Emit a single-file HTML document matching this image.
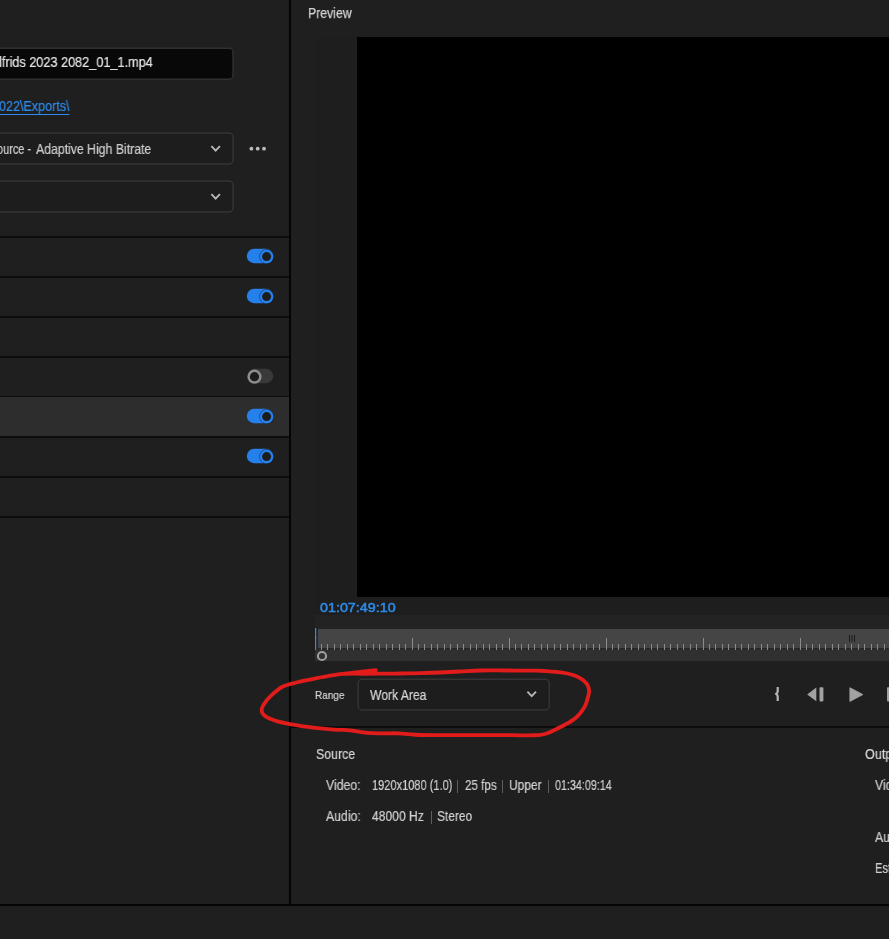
<!DOCTYPE html>
<html><head><meta charset="utf-8"><title>Export</title>
<style>
html,body{margin:0;padding:0;background:#1f1f1f;}
body{width:889px;height:939px;position:relative;overflow:hidden;font-family:"Liberation Sans",sans-serif;color:#d2d2d2;}
.abs{position:absolute;}
.t{-webkit-text-stroke:0.2px currentColor;will-change:transform;position:absolute;white-space:nowrap;line-height:1;transform-origin:0 0;}
.box{position:absolute;box-sizing:border-box;border:1px solid #3a3a3a;border-radius:4px;background:#1d1d1d;}
.sep{position:absolute;left:0;width:289px;height:2px;background:#0d0d0d;}
.tog{position:absolute;left:247px;width:26px;height:14px;border-radius:7px;background:#2680eb;}
.tog i{position:absolute;right:0;top:0;width:14px;height:14px;box-sizing:border-box;border-radius:50%;border:2px solid #2680eb;background:#1e1e1e;box-shadow:0 0 0 1px #1e1e1e;}
.tog.off{background:#3a3a3a;}
.tog.off i{right:auto;left:0;border-color:#8e8e8e;box-shadow:none;}
</style></head><body>

<!-- left panel -->
<div class="abs" style="left:0;top:397px;width:289px;height:39px;background:#2d2d2d;"></div>
<div class="sep" style="top:236px"></div>
<div class="sep" style="top:276px"></div>
<div class="sep" style="top:316px"></div>
<div class="sep" style="top:356px"></div>
<div class="sep" style="top:396px;height:1px"></div>
<div class="sep" style="top:436px"></div>
<div class="sep" style="top:476px"></div>
<div class="sep" style="top:516px"></div>

<svg class="abs" style="left:0;top:0" width="889" height="939" viewBox="0 0 889 939">
<g fill="#1d1d1d" stroke="#343434" stroke-width="1.5">
<rect x="-10" y="48.25" width="243.05" height="31" rx="4" fill="#080808" stroke="#303030"/>
<rect x="-10" y="133.05" width="243.05" height="31" rx="4"/>
<rect x="-10" y="181" width="243.05" height="31" rx="4"/>
<rect x="358.2" y="679.3" width="191.1" height="30.6" rx="4"/>
</g>
<g fill="none" stroke="#b6b6b6" stroke-width="1.9">
<path d="M211.4 146.2 L215.65 150.7 L219.9 146.2"/>
<path d="M211.4 194.2 L215.65 198.7 L219.9 194.2"/>
<path d="M527.4 691.6 L531.7 696.1 L536 691.6"/>
</g>
<g transform="translate(0,0)"><rect x="246.8" y="248.8" width="26.4" height="14.4" rx="7.2" fill="#2680eb"/><circle cx="266.6" cy="256.6" r="7.35" fill="#1c1c1c" opacity=".75"/><circle cx="266.6" cy="256.6" r="6.8" fill="#2680eb"/><circle cx="266.6" cy="256.6" r="4.5" fill="#1c1c1c"/></g>
<g transform="translate(0,40)"><rect x="246.8" y="248.8" width="26.4" height="14.4" rx="7.2" fill="#2680eb"/><circle cx="266.6" cy="256.6" r="7.35" fill="#1c1c1c" opacity=".75"/><circle cx="266.6" cy="256.6" r="6.8" fill="#2680eb"/><circle cx="266.6" cy="256.6" r="4.5" fill="#1c1c1c"/></g>
<g transform="translate(0,120)"><rect x="247.4" y="248.8" width="25.9" height="14.4" rx="7.2" fill="#393939"/><circle cx="254.5" cy="256.7" r="7.1" fill="#8e8e8e"/><circle cx="254.5" cy="256.7" r="4.6" fill="#1c1c1c"/></g>
<g transform="translate(0,160)"><rect x="246.8" y="248.8" width="26.4" height="14.4" rx="7.2" fill="#2680eb"/><circle cx="266.6" cy="256.6" r="7.35" fill="#1c1c1c" opacity=".75"/><circle cx="266.6" cy="256.6" r="6.8" fill="#2680eb"/><circle cx="266.6" cy="256.6" r="4.5" fill="#1c1c1c"/></g>
<g transform="translate(0,200)"><rect x="246.8" y="248.8" width="26.4" height="14.4" rx="7.2" fill="#2680eb"/><circle cx="266.6" cy="256.6" r="7.35" fill="#1c1c1c" opacity=".75"/><circle cx="266.6" cy="256.6" r="6.8" fill="#2680eb"/><circle cx="266.6" cy="256.6" r="4.5" fill="#1c1c1c"/></g>
<g fill="#bdbdbd"><circle cx="251.4" cy="148.7" r="1.9"/><circle cx="257.7" cy="148.7" r="1.9"/><circle cx="264" cy="148.7" r="1.9"/></g>
</svg>
<div class="t" id="fn" style="left:-1px;transform:scaleX(0.887);top:55px;font-size:14.3px;color:#e6e6e6;">lfrids 2023 2082_01_1.mp4</div>
<div class="t" id="lnk" style="left:-1px;transform:scaleX(0.878);top:99px;font-size:14.3px;color:#2d8ceb;text-decoration:underline;text-decoration-thickness:1px;text-underline-offset:2.5px;">022\Exports\</div>
<div class="t" id="pre" style="left:-2.6px;transform:scaleX(0.765);top:141.7px;font-size:14.3px;color:#d0d0d0;">ource -</div>
<div class="t" id="pre2" style="left:35.6px;transform:scaleX(0.858);top:141.7px;font-size:14.3px;color:#d0d0d0;">Adaptive High Bitrate</div>

<!-- dividers -->
<div class="abs" style="left:289px;top:0;width:2px;height:905px;background:#050505;"></div>
<div class="abs" style="left:0;top:904px;width:889px;height:2px;background:#050505;"></div>

<!-- preview -->
<div class="t" id="pv" style="left:307.5px;transform:scaleX(0.876);top:6.2px;font-size:14px;color:#d2d2d2;-webkit-text-stroke:0.25px #d2d2d2;">Preview</div>
<div class="abs" style="left:315px;top:37px;width:574px;height:578px;background:#1e1e1e;"></div>
<div class="abs" style="left:357px;top:37px;width:532px;height:560px;background:#000;"></div>
<div class="t" id="tc" style="left:320px;transform:scaleX(1.085);top:601px;font-size:13.2px;color:#2d8ceb;-webkit-text-stroke:0.5px #2d8ceb;">01:07:49:10</div>

<!-- timeline -->
<div class="abs" style="left:315px;top:615px;width:574px;height:35px;background:#232323;"></div>
<div class="abs" style="left:318px;top:648px;width:571px;height:2px;background:#292929;"></div>
<div class="abs" style="left:318px;top:629px;width:571px;height:19px;background:#454545;"></div>
<div class="abs" style="left:315px;top:650px;width:574px;height:11px;background:#303030;"></div>
<svg class="abs" id="ruler" style="left:0;top:0" width="889" height="939" viewBox="0 0 889 939">
<g fill="#8c8c8c"><rect x="321" y="644" width="1" height="6"/><rect x="327" y="644" width="1" height="6"/><rect x="334" y="644" width="1" height="6"/><rect x="340" y="644" width="1" height="6"/><rect x="347" y="644" width="1" height="6"/><rect x="353" y="644" width="1" height="6"/><rect x="360" y="644" width="1" height="6"/><rect x="366" y="644" width="1" height="6"/><rect x="373" y="644" width="1" height="6"/><rect x="379" y="644" width="1" height="6"/><rect x="386" y="644" width="1" height="6"/><rect x="392" y="644" width="1" height="6"/><rect x="399" y="644" width="1" height="6"/><rect x="405" y="644" width="1" height="6"/><rect x="412" y="638" width="1" height="12"/><rect x="418" y="644" width="1" height="6"/><rect x="424" y="644" width="1" height="6"/><rect x="431" y="644" width="1" height="6"/><rect x="437" y="644" width="1" height="6"/><rect x="444" y="644" width="1" height="6"/><rect x="450" y="644" width="1" height="6"/><rect x="457" y="644" width="1" height="6"/><rect x="463" y="644" width="1" height="6"/><rect x="470" y="644" width="1" height="6"/><rect x="476" y="644" width="1" height="6"/><rect x="483" y="644" width="1" height="6"/><rect x="489" y="644" width="1" height="6"/><rect x="496" y="644" width="1" height="6"/><rect x="502" y="644" width="1" height="6"/><rect x="509" y="638" width="1" height="12"/><rect x="515" y="644" width="1" height="6"/><rect x="521" y="644" width="1" height="6"/><rect x="528" y="644" width="1" height="6"/><rect x="534" y="644" width="1" height="6"/><rect x="541" y="644" width="1" height="6"/><rect x="547" y="644" width="1" height="6"/><rect x="554" y="644" width="1" height="6"/><rect x="560" y="644" width="1" height="6"/><rect x="567" y="644" width="1" height="6"/><rect x="573" y="644" width="1" height="6"/><rect x="580" y="644" width="1" height="6"/><rect x="586" y="644" width="1" height="6"/><rect x="593" y="644" width="1" height="6"/><rect x="599" y="644" width="1" height="6"/><rect x="606" y="638" width="1" height="12"/><rect x="612" y="644" width="1" height="6"/><rect x="618" y="644" width="1" height="6"/><rect x="625" y="644" width="1" height="6"/><rect x="631" y="644" width="1" height="6"/><rect x="638" y="644" width="1" height="6"/><rect x="644" y="644" width="1" height="6"/><rect x="651" y="644" width="1" height="6"/><rect x="657" y="644" width="1" height="6"/><rect x="664" y="644" width="1" height="6"/><rect x="670" y="644" width="1" height="6"/><rect x="677" y="644" width="1" height="6"/><rect x="683" y="644" width="1" height="6"/><rect x="690" y="644" width="1" height="6"/><rect x="696" y="644" width="1" height="6"/><rect x="703" y="638" width="1" height="12"/><rect x="709" y="644" width="1" height="6"/><rect x="715" y="644" width="1" height="6"/><rect x="722" y="644" width="1" height="6"/><rect x="728" y="644" width="1" height="6"/><rect x="735" y="644" width="1" height="6"/><rect x="741" y="644" width="1" height="6"/><rect x="748" y="644" width="1" height="6"/><rect x="754" y="644" width="1" height="6"/><rect x="761" y="644" width="1" height="6"/><rect x="767" y="644" width="1" height="6"/><rect x="774" y="644" width="1" height="6"/><rect x="780" y="644" width="1" height="6"/><rect x="787" y="644" width="1" height="6"/><rect x="793" y="644" width="1" height="6"/><rect x="800" y="638" width="1" height="12"/><rect x="806" y="644" width="1" height="6"/><rect x="812" y="644" width="1" height="6"/><rect x="819" y="644" width="1" height="6"/><rect x="825" y="644" width="1" height="6"/><rect x="832" y="644" width="1" height="6"/><rect x="838" y="644" width="1" height="6"/><rect x="845" y="644" width="1" height="6"/><rect x="851" y="644" width="1" height="6"/><rect x="858" y="644" width="1" height="6"/><rect x="864" y="644" width="1" height="6"/><rect x="871" y="644" width="1" height="6"/><rect x="877" y="644" width="1" height="6"/><rect x="884" y="644" width="1" height="6"/></g>
<rect x="315" y="628" width="1.2" height="22" fill="#2d8ceb"/><rect x="315" y="637" width="1.2" height="1.6" fill="#8a7f78"/>
<circle cx="322" cy="656" r="4.1" fill="#333" stroke="#a0a0a0" stroke-width="2"/>
<g fill="#1c1c1c"><rect x="849" y="635" width="1" height="7"/><rect x="851.5" y="635" width="1" height="7"/><rect x="854" y="635" width="1" height="7"/></g>
</svg>

<!-- range -->
<div class="t" id="rg" style="left:315px;transform:scaleX(0.87);top:689.6px;font-size:11.5px;color:#d6d6d6;">Range</div>
<div class="t" id="wa" style="left:370.2px;transform:scaleX(0.838);top:687.8px;font-size:14.5px;color:#d8d8d8;">Work Area</div>

<!-- transport -->
<svg class="abs" style="left:770px;top:684px" width="119" height="22" viewBox="770 684 119 22">
<g fill="#a2a2a2">
<path d="M777.7 686.9 V691.4 Q777.7 692.8 776 693.9 Q777.7 695 777.7 696.4 V701" fill="none" stroke="#b4b4b4" stroke-width="2.2" stroke-linejoin="round"/>
<path d="M807.2 694.4 L816.3 687.6 V701.2 Z"/>
<rect x="819.5" y="687.2" width="3.9" height="14.2" rx="0.8"/>
<path d="M849.9 687.7 L862.9 694.6 L849.9 701.5 Z" stroke="#a2a2a2" stroke-width="0.8" stroke-linejoin="round"/>
<rect x="887" y="687.2" width="3.9" height="14.2" rx="0.8"/>
</g></svg>

<div class="abs" style="left:291px;top:726px;width:598px;height:2px;background:#0d0d0d;"></div>

<!-- source info -->
<div class="t" id="src" style="left:316px;transform:scaleX(0.884);top:747px;font-size:14px;color:#d6d6d6;">Source</div>
<div class="t" id="vd" style="left:326.3px;transform:scaleX(0.877);top:778.2px;font-size:14px;color:#d0d0d0;">Video:</div>
<div class="t" id="vd1" style="left:372px;transform:scaleX(0.788);top:778.2px;font-size:14px;color:#d0d0d0;">1920x1080 (1.0)</div>
<div class="t" id="vd2" style="left:464.8px;transform:scaleX(0.829);top:778.2px;font-size:14px;color:#d0d0d0;">25 fps</div>
<div class="t" id="vd3" style="left:509px;transform:scaleX(0.854);top:778.2px;font-size:14px;color:#d0d0d0;">Upper</div>
<div class="t" id="vd4" style="left:555px;transform:scaleX(0.766);top:778.2px;font-size:14px;color:#d0d0d0;">01:34:09:14</div>
<div class="t" id="au" style="left:326.3px;transform:scaleX(0.877);top:808.7px;font-size:14px;color:#d0d0d0;">Audio:</div>
<div class="t" id="au1" style="left:372.2px;transform:scaleX(0.865);top:808.7px;font-size:14px;color:#d0d0d0;">48000 Hz</div>
<div class="t" id="au2" style="left:437.2px;transform:scaleX(0.851);top:808.7px;font-size:14px;color:#d0d0d0;">Stereo</div>
<div class="abs" style="left:457px;top:780px;width:1px;height:13px;background:#5e5e5e;"></div>
<div class="abs" style="left:502px;top:780px;width:1px;height:13px;background:#5e5e5e;"></div>
<div class="abs" style="left:548px;top:780px;width:1px;height:13px;background:#5e5e5e;"></div>
<div class="abs" style="left:431px;top:811px;width:1px;height:13px;background:#5e5e5e;"></div>

<div class="t" id="out" style="left:865px;transform:scaleX(0.9);top:747px;font-size:14px;color:#d6d6d6;">Output</div>
<div class="t" id="ov" style="left:875px;transform:scaleX(0.877);top:778.2px;font-size:14px;color:#d0d0d0;">Video:</div>
<div class="t" id="oa" style="left:875px;transform:scaleX(0.877);top:829.7px;font-size:14px;color:#d0d0d0;">Audio:</div>
<div class="t" id="oe" style="left:875px;transform:scaleX(0.80);top:860.7px;font-size:14px;color:#d0d0d0;">Estimated File Size:</div>

<!-- red annotation -->
<svg class="abs" style="left:250px;top:660px" width="350" height="85" viewBox="250 660 350 85">
<path id="red" d="M375.8 670.1 C374.5 670.2 370.6 670.5 368.0 670.8 C365.4 671.1 362.7 671.5 360.0 671.8 C357.3 672.1 354.5 672.5 352.0 672.8 C349.5 673.1 347.3 673.3 345.0 673.6 C342.7 673.9 340.7 674.0 338.0 674.4 C335.3 674.8 332.0 675.4 329.0 675.9 C326.0 676.4 323.0 676.9 320.0 677.5 C317.0 678.1 314.5 678.6 311.2 679.3 C307.9 680.0 303.8 680.7 300.0 681.6 C296.2 682.5 291.7 683.6 288.7 684.5 C285.7 685.4 284.1 685.9 282.0 687.0 C279.9 688.1 278.3 689.4 276.4 690.9 C274.5 692.4 272.5 694.2 270.7 696.0 C268.9 697.8 267.1 699.7 265.7 701.6 C264.3 703.5 263.0 705.6 262.3 707.2 C261.6 708.8 261.4 709.9 261.7 711.2 C262.0 712.5 262.7 713.9 264.0 715.1 C265.3 716.3 267.4 717.5 269.6 718.5 C271.9 719.5 274.3 720.4 277.5 721.3 C280.7 722.2 284.9 723.1 288.7 723.9 C292.4 724.6 296.2 725.2 300.0 725.8 C303.8 726.4 307.4 726.8 311.2 727.3 C314.9 727.8 318.8 728.2 322.5 728.6 C326.2 729.0 330.4 729.4 333.7 729.6 C336.9 729.8 339.3 729.8 342.0 729.9 C344.7 730.0 346.8 730.0 350.0 730.4 C353.2 730.8 357.4 731.6 361.2 732.1 C364.9 732.6 368.8 733.0 372.5 733.2 C376.2 733.4 379.4 733.3 383.7 733.3 C388.0 733.3 394.3 733.2 398.4 733.3 C402.5 733.4 404.9 733.8 408.5 734.1 C412.1 734.4 412.8 734.8 419.7 735.0 C426.6 735.2 439.9 735.1 450.0 735.1 C460.1 735.1 469.8 735.1 480.0 735.1 C490.2 735.1 503.2 735.2 511.2 735.2 C519.2 735.2 523.2 735.5 528.1 735.4 C533.0 735.3 537.3 735.1 540.5 734.8 C543.7 734.4 545.0 734.0 547.2 733.3 C549.5 732.5 551.4 731.5 554.0 730.3 C556.6 729.0 560.0 727.4 563.0 725.8 C566.0 724.2 569.6 722.3 572.0 720.7 C574.4 719.1 575.9 717.9 577.6 716.2 C579.3 714.5 580.8 712.5 582.1 710.6 C583.4 708.7 584.6 707.1 585.5 705.0 C586.4 702.9 587.1 700.5 587.7 698.2 C588.3 696.0 589.1 693.6 589.1 691.5 C589.1 689.4 588.7 687.2 587.7 685.3 C586.7 683.4 585.1 681.7 583.2 680.2 C581.3 678.7 579.1 677.4 576.5 676.3 C573.9 675.2 570.9 674.2 567.5 673.5 C564.1 672.8 560.0 672.2 556.2 671.8 C552.5 671.4 548.6 671.2 545.0 671.0 C541.4 670.8 540.8 670.8 534.5 670.7 C528.2 670.6 516.5 670.5 507.5 670.5 C498.5 670.5 488.4 670.3 480.5 670.5 C472.6 670.7 466.8 671.2 460.0 671.5 C453.2 671.8 446.5 672.2 440.0 672.5 C433.5 672.8 427.7 673.0 421.0 673.2 C414.3 673.4 406.8 673.4 400.0 673.5 C393.2 673.6 385.8 673.7 380.0 673.7 C374.2 673.8 369.7 673.8 365.0 673.8 C360.3 673.8 355.3 673.7 352.0 673.7 C348.7 673.7 346.2 673.8 345.0 673.8" fill="none" stroke="#e21b1b" stroke-width="3.8" stroke-linecap="round" stroke-linejoin="round"/>
</svg>

</body></html>
